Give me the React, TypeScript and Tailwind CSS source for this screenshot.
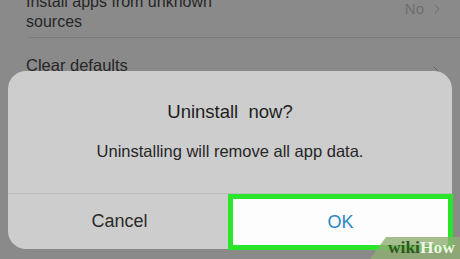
import { ChevronRight } from 'lucide-react';

export default function App() {
  return (
    <div
      className="relative h-[259px] w-[460px] overflow-hidden bg-[#8a8a8a]"
      style={{ fontFamily: '"Liberation Sans", Arial, sans-serif' }}
    >
      {/* settings list behind the dim */}
      <div className="-mt-[8px]">
        <div className="flex items-start justify-between pl-[26px] pr-[15px]">
          <div className="text-[16px] leading-[20px] text-[#262626]">
            <div>Install apps from unknown</div>
            <div>sources</div>
          </div>
          <div className="mt-[7px] flex items-center gap-[5px] text-[15px] leading-[20px] text-[#6e6e6e]">
            <span>No</span>
            <ChevronRight size={16} strokeWidth={1.5} />
          </div>
        </div>
        <div className="ml-[27px] mt-[5px] h-px bg-[#7c7c7c]" />
        <div className="flex items-center justify-between pl-[26px] pr-[16px] pt-[13px]">
          <span className="text-[16.5px] leading-[20px] text-[#262626]">Clear defaults</span>
          <ChevronRight size={16} strokeWidth={1.5} className="mt-[12px] text-[#5e5e5e]" />
        </div>
      </div>

      {/* dialog */}
      <div className="absolute left-[8px] top-[71px] flex h-[178px] w-[444px] flex-col rounded-[18px] bg-[#cdcdcd]">
        <div className="flex flex-1 flex-col items-center">
          <h2 className="mt-[30px] text-[18.5px] leading-[22px] text-[#1e1e1e]">Uninstall&nbsp; now?</h2>
          <p className="mt-[18px] text-[16.5px] leading-[20px] text-[#262626]">
            Uninstalling will remove all app data.
          </p>
        </div>
        <div className="grid h-[56px] grid-cols-2 border-t border-[#bdbdbd]">
          <button className="flex items-center justify-center pl-[1px] text-[18px] text-[#2a2a2a]">
            Cancel
          </button>
          <button className="-mb-[1px] -ml-[2px] -mr-[1px] flex items-center justify-center border-[5px] border-[#2be52b] bg-[#fdfdfd] text-[18px] text-[#2a86c8]">
            OK
          </button>
        </div>
      </div>

      {/* watermark */}
      <div className="absolute bottom-0 right-0 flex h-[22px] w-[90px] items-center justify-end bg-[#8fae72]/80 pr-[5px] [clip-path:polygon(16px_0,100%_0,100%_100%,0_100%)]">
        <span
          className="text-[17.5px] font-bold leading-none"
          style={{ fontFamily: '"Liberation Serif", "Times New Roman", serif' }}
        >
          <span className="text-[#2d5a1c]">wiki</span>
          <span className="text-[#eef4e6]">How</span>
        </span>
      </div>
    </div>
  );
}
